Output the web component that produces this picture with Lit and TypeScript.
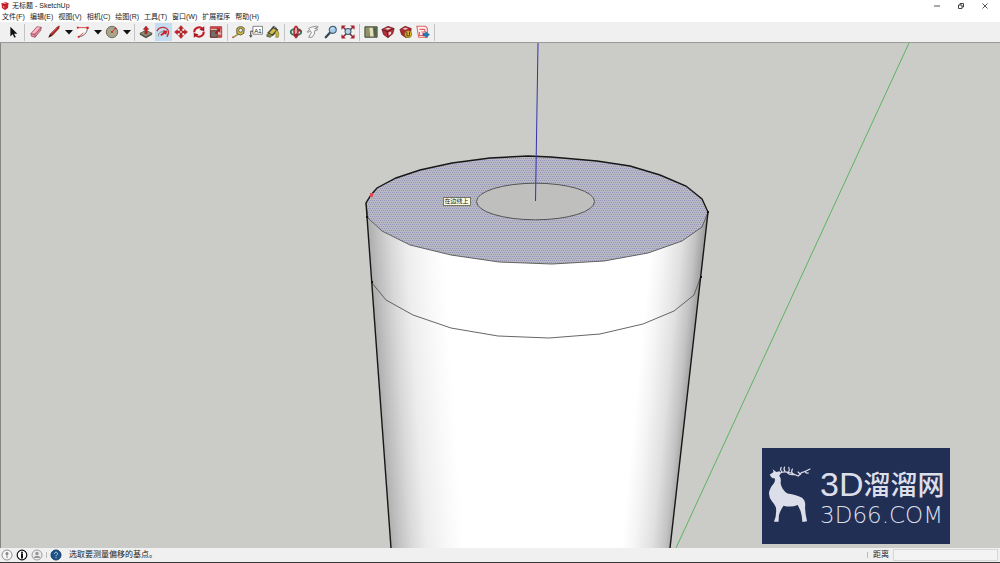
import { LitElement, html, css, svg } from "lit";
import { customElement } from "lit/decorators.js";

const icons: Record<string, unknown> = {
  select: svg`<path d="M5 2v11l2.600-2.500 2 4 1.600-.8-2-3.800H13z" fill="#111"/>`,
  eraser: svg`<path d="M2 10 9 2l5 .5-.5 3.500L7 14l-4-1z" fill="#e88da2" stroke="#8c4659" stroke-width=".8"/><path d="M2 10l5 .7L14 2.700M7 10.700V14" fill="none" stroke="#8c4659" stroke-width=".8"/><path d="M3.500 9 9.500 2.500l3 .3L6.500 9.500z" fill="#f6bcc8"/>`,
  pencil: svg`<path d="M2 14l2-4 7.500-7.500L14 1l-.5 3L6 12z" fill="#b3201f" stroke="#5f1515" stroke-width=".7"/><path d="M2 14l1.500-3.500L5.500 12z" fill="#222"/><path d="M5 9.700 11.700 3" stroke="#e0605c"/>`,
  arc: svg`<path d="M2 3h11.500C13 9 9 13 3 14z" fill="#faf7f5"/><path d="M13 3.500C13 9 8.500 13 3 13.500" fill="none" stroke="#555"/><path d="M2 3h11M3 13.500l5.500-4.500" stroke="#cc3c35" fill="none"/><g fill="#cf2020"><rect x="1" y="2" width="2" height="2"/><rect x="12" y="2" width="2.500" height="2.500"/><rect x="2" y="12.500" width="2" height="2"/></g>`,
  circle: svg`<circle cx="8" cy="8" r="6.500" fill="#a8a58c" stroke="#6b6959" stroke-width="1.100"/><path d="M8 8l4-4.500" stroke="#c83030"/><circle cx="8" cy="8" r="1.200" fill="#cf2626"/><circle cx="12" cy="3.800" r="1" fill="#cf2626"/>`,
  push: svg`<path d="M1 9.500 8 6l7 3.500L8 14z" fill="#8d8a78" stroke="#4b493f" stroke-width=".8"/><path d="M1 9.500 8 13l7-3.500V11l-7 4-7-4z" fill="#55534b"/><path d="M8 1l3.200 4H9.300v5H6.700V5H4.800z" fill="#bd2323" stroke="#711" stroke-width=".4"/>`,
  offset: svg`<path d="M1 7C4 1.500 11.500 1.500 14 6.500c1 2.500 0 4.500-1.500 7" fill="none" stroke="#c3303c" stroke-width="1.500"/><path d="M3 13c-1-3 2-6 5.500-5" fill="none" stroke="#777" stroke-width="1.100"/><path d="M7.500 6 13 6.500l-1.500 5-1.300-1.600L6 12.500 4.800 11l3.900-3z" fill="#c7202a"/>`,
  move: svg`<path d="M8 .5l3 3.500H9.200v2.800H6.800V4H5zM8 15.500l3-3.500H9.200V9.200H6.800V12H5zM.5 8 4 5v1.800h2.800v2.400H4V11zM15.500 8 12 5v1.800H9.200v2.400H12V11z" fill="#c4202a" stroke="#8f171e" stroke-width=".4"/>`,
  rotate: svg`<path d="M2.600 8.500A5.400 5.400 0 0 1 11.500 4M13.400 7.500A5.400 5.400 0 0 1 4.500 12" fill="none" stroke="#c01d28" stroke-width="2.400"/><path d="M14 1.500V7L8.500 5.500zM2 14.500V9l5.500 1.500z" fill="#a61921"/>`,
  scale: svg`<path d="M1.500 2h13v12h-13z" fill="#dcc0b4" stroke="#9f2a2e"/><path d="M2 6.500h7.500V14H2z" fill="#76706a" stroke="#54332f"/><path d="M2 2h12v2.500H2z" fill="#c8474a"/><path d="M13 4v5l-1.700-1.700L8 10.500 6.500 9l3.300-3.300L8 4z" fill="#a91e24"/><path d="M10 11h4v3h-4z" fill="#c8474a"/>`,
  tape: svg`<path d="M1 14.500l6-4" stroke="#a69340" stroke-width="1.800"/><path d="M5.500 4.500C6 1.500 13 1 14 4l-.5 5.500-4 2-4-2z" fill="#d8bd36" stroke="#4d4a37"/><circle cx="9.800" cy="6" r="2.200" fill="#eee" stroke="#555"/><path d="M1 13v2" stroke="#c23232"/>`,
  text: svg`<path d="M4.500 1.500h11v9h-11z" fill="#fff" stroke="#555" stroke-width=".8"/><path d="M4.500 7H2v6M.8 11.500 2 14l1.200-2.500" stroke="#333" fill="none"/><text x="6" y="8.800" font-size="7" font-family="Liberation Sans, sans-serif" fill="#222">A1</text>`,
  paint: svg`<path d="M2 9 8 2.500l5.500 3L8 12z" fill="#55533d" stroke="#28271d"/><path d="M3.500 9 8.500 4l3 1.800L7 10.500z" fill="#d4c04a"/><path d="M7 3c1-3 5-1 5 2" stroke="#444" fill="none"/><path d="M12 6c3 1 3 5 2 8h-3c1-3 .5-4-1-5z" fill="#c8b63d" stroke="#645e28" stroke-width=".6"/><path d="M1 11c2-3 5-1 6 1l-2 2-4-1z" fill="#88894f" stroke="#383a25" stroke-width=".7"/>`,
  orbit: svg`<ellipse cx="8" cy="8" rx="6" ry="3.600" fill="#dfe6e0" stroke="#32765d" stroke-width="2.200"/><path d="M8 1.500c-3 1.500-3 11 0 13 3-2 3-11.500 0-13" fill="#d9a9a9" stroke="#b42c35" stroke-width="1.800"/><path d="M5 11.500 9.500 9v5zM11.500 4.500l3.500 3h-5z" fill="#a3202b"/>`,
  hand: svg`<path d="M3 4 6 2.500l6-1.200 2 1-4 1.700 3 .5v1.200L10 6.500l-.5 4L7 14H3l3-5-1-2.500-3 2-.7-.8L4 5z" fill="#f7f7f5" stroke="#777" stroke-width=".9"/>`,
  zoom: svg`<path d="M2 14l5-5.500" stroke="#364655" stroke-width="2.600" stroke-linecap="round"/><circle cx="10" cy="5.500" r="4" fill="#a5cce6" stroke="#466177" stroke-width="1.300"/><path d="M8 5c.5-1.500 2-2 3-1.500" fill="none" stroke="#f1faff"/>`,
  extents: svg`<path d="M2 2l12 12M14 2 2 14" stroke="#7b2b38" stroke-width="1.700"/><path d="M.5.5h5l-5 5zM15.500.5v5l-5-5zM.5 15.500v-5l5 5zM15.500 15.500h-5l5-5z" fill="#b01d2c"/><circle cx="8" cy="7.500" r="3.400" fill="#b4d5e4" stroke="#435668" stroke-width="1.200"/>`,
  map: svg`<path d="M1 2h14v12H1z" fill="#737958" stroke="#414633"/><path d="M2 3h4v10H2z" fill="#8f9569"/><path d="M6 3h4l1 10H7z" fill="#e3dfba"/><path d="M11 3h3v10h-2z" fill="#4e644b"/>`,
  warehouse: svg`<path d="M1 5l7-3.500L15 4l-1.500 6L8 14.500 3 11z" fill="#b5303a" stroke="#6d1a20" stroke-width=".8"/><path d="M1 5l6 2.500L15 4M7 7.500l1 7" stroke="#5f1a20" fill="none"/><path d="M4.500 4.500 8 3l3.500 1L8 5.500zM8.500 8.500l3-1V10L9 12z" fill="#eadad5"/>`,
  extension: svg`<path d="M1 5l6-3.500L14 4l-1 6-5 4.500L3 11z" fill="#ac2930" stroke="#6d1a20" stroke-width=".8"/><path d="M4 4.500l3-1.500 3.500 1L7.500 5.500z" fill="#ecd9d5"/><circle cx="10.500" cy="10.500" r="4" fill="#ddb82e" stroke="#776021" stroke-width=".8"/><path d="M9 8v3c0 2 3 2 3 0V8" fill="none" stroke="#61421a" stroke-width="1.200"/>`,
  layout: svg`<path d="M1 1.500h10l2 2.500v10H3z" fill="#fff1ef" stroke="#e06463" stroke-width="1.200"/><path d="M4 5h6v3H6M4 8v4h4V9" fill="none" stroke="#e06463" stroke-width="1.200"/><path d="M8 9.500h3V7.500l4.500 3.500-4.500 3.500V12.500H8z" fill="#2878b8" stroke="#165586" stroke-width=".5"/>`,
};

const tool = (name: string, label: string, on = false) => html`
  <button class="tool ${on ? "on" : ""}" aria-label=${label}>
    <svg viewBox="0 0 16 16" width="14" height="14">${icons[name]}</svg>
  </button>`;

const caret = (label: string) => html`
  <button class="tool caret" aria-label=${label}>
    <svg viewBox="0 0 8 5" width="8" height="5"><path d="M0 0h8L4 4.500z" fill="#111"/></svg>
  </button>`;

@customElement("model-view")
class ModelView extends LitElement {
  static styles = css`
    :host { display: block; position: relative; min-height: 0; overflow: hidden; background: #cbccc7; border-left: 1px solid #858683; }
    .scene { display: block; width: 100%; height: 100%; }
    .tip { position: absolute; left: 44.2%; top: 30.5%; padding: 0 1px; border: 1px solid #77765f; background: #fbfbe2; color: #222; font-size: 6px; line-height: 7px; white-space: nowrap; }
    .mark { position: absolute; right: 5%; bottom: 4px; box-sizing: border-box; width: 188px; height: 96px; padding: 17px 5px; display: flex; gap: 8px; background: #222f55; color: #dcdfe9; }
    .deer { flex: none; width: 45px; height: 59px; }
    .words { display: flex; flex-direction: column; white-space: nowrap; }
    .name { display: flex; align-items: center; height: 38px; }
    .latin { font: 34px/38px "Liberation Sans", sans-serif; }
    .han { font: 500 27px/38px "Noto Sans CJK SC", sans-serif; }
    .domain { font: 23px/24px "DejaVu Sans", sans-serif; font-weight: 300; }
  `;

  render() {
    return html`
      <svg class="scene" viewBox="1 43 999 505" preserveAspectRatio="xMidYMid slice" role="img" aria-label="模型">
        <defs>
          <linearGradient id="left" gradientUnits="userSpaceOnUse" x1="375" y1="330" x2="449" y2="325">
            <stop offset="0" stop-color="#adadad"/><stop offset=".12" stop-color="#c0c0c1"/>
            <stop offset=".3" stop-color="#d9d9da"/><stop offset=".5" stop-color="#ededed"/>
            <stop offset=".8" stop-color="#f9f9f9"/><stop offset="1" stop-color="#fff"/>
          </linearGradient>
          <linearGradient id="right" gradientUnits="userSpaceOnUse" x1="694" y1="330" x2="643" y2="325">
            <stop offset="0" stop-color="#a4a4a5"/><stop offset=".15" stop-color="#c3c3c4"/>
            <stop offset=".4" stop-color="#e0e0e0"/><stop offset=".75" stop-color="#f5f5f5"/>
            <stop offset="1" stop-color="#fff"/>
          </linearGradient>
          <pattern id="dots" width="2" height="4" patternUnits="userSpaceOnUse">
            <path d="M0 0h2v4H0z" fill="#b9b9c5"/><path d="M0 0h1v1H0zM1 2h1v1H1z" fill="#9494b8"/>
          </pattern>
        </defs>
        <path d="M909 43 676 548" stroke="#5cb462" fill="none"/>
        <path d="M366 203 391 548H540V200z" fill="url(#left)"/>
        <path d="M708 212 670 548H539V200z" fill="url(#right)"/>
        <path d="M366 203 371 195 377 188 396 178 420 170 452 163 490 158 528 156 551 157 597 161 630 166 660 175 686 186 702 199 708 212 702 227 682 241 648 253 604 261 552 264 499 262 451 255 410 245 382 231 368 218z" fill="url(#dots)"/>
        <path d="M366 203 368 218 382 231 410 245 451 255 499 262 552 264 604 261 648 253 682 241 702 227 708 212M372 283 386 300 413 315 451 328 498 336 549 338 600 334 643 324 674 311 694 295 701 276" fill="none" stroke="#555" stroke-width=".9"/>
        <path d="M391 548 366 203 371 195 377 188 396 178 420 170 452 163 490 158 528 156 551 157 597 161 630 166 660 175 686 186 702 199 708 212 670 548" fill="none" stroke="#171717" stroke-width="1.400"/>
        <ellipse cx="535.500" cy="201.500" rx="59" ry="18.300" fill="#bfbfbe" stroke="#555"/>
        <path d="M538 43 535.500 201" stroke="#3434ad" fill="none"/>
        <path d="M370 193h3v4h-3z" fill="#d94a55"/>
        <path d="M366 216h2v2h-2zM371 281h2v2h-2zM707 211h2v2h-2zM700 276h2v2h-2z" fill="#111"/>
      </svg>
      <div class="tip">在边线上</div>
      <div class="mark">
        <svg class="deer" viewBox="36 74 136 176" aria-hidden="true">
          <path d="M44 102 56 94 53 86 64 94 74 92 78 98 73 105Q80 113 77 128 81 149 98 159 126 163 142 172 154 182 151 200 151 217 157 243L143 245Q142 225 137 210 132 202 129 194 108 202 86 196 76 210 72 225L71 244H57Q66 225 63 201 58 190 52 184 39 168 43 152 47 138 57 128 62 119 59 113 50 114 44 102z" fill="#dcdfe9"/>
          <path d="M74 98Q84 92 98 94 116 98 130 106 136 102 140 96 154 92 166 85M82 94Q74 88 79 80M91 93Q85 87 89 79M101 95Q105 87 102 80M113 99Q108 92 113 85M137 101 130 94M151 92Q153 99 161 97M96 95Q104 104 118 102" fill="none" stroke="#dcdfe9" stroke-width="3.500" stroke-linecap="round"/>
        </svg>
        <div class="words">
          <div class="name"><span class="latin">3D</span><span class="han">溜溜网</span></div>
          <div class="domain">3D66.COM</div>
        </div>
      </div>`;
  }
}

@customElement("app-root")
class AppRoot extends LitElement {
  static styles = css`
    :host { display: grid; grid-template-rows: 12px 10px 21px minmax(0, 1fr) 14px; box-sizing: border-box; height: 100vh; border-bottom: 1px solid #363636; background: #fff; color: #222; font-family: "Liberation Sans", "Noto Sans CJK SC", sans-serif; }
    button, input { font: inherit; color: inherit; margin: 0; padding: 0; border: 0; background: none; }
    button { display: flex; align-items: center; justify-content: center; }
    .title { display: flex; align-items: center; gap: 3px; padding: 0 5px 0 1px; font-size: 7px; line-height: 12px; }
    .caption { flex: 1; }
    .win { width: 21px; height: 12px; }
    .menu { display: flex; align-items: center; gap: 5px; padding-left: 2px; font-size: 7px; line-height: 10px; white-space: nowrap; }
    .bar { display: flex; align-items: center; box-sizing: border-box; padding-left: 4px; background: #f0f0f0; border-bottom: 1px solid #9b9b99; }
    .group { display: grid; grid-auto-flow: column; grid-auto-columns: 1fr; }
    .single { width: 18px; }
    .draw { grid-template-columns: 18px 18px 11px 18px 11px 18px 11px; }
    .edit { width: 88px; }
    .three { width: 52px; }
    .four { width: 70px; }
    .tool { height: 18px; }
    .on { background: #c5ddf1; }
    .rule { width: 1px; height: 17px; margin: 0 2px; background: #c3c3c3; }
    .status { display: flex; align-items: center; gap: 3px; padding: 0 2px 0 1px; background: #f0f0f0; font-size: 8px; line-height: 14px; }
    .round { width: 12px; height: 12px; }
    .thin { width: 1px; height: 6px; background: #bbb; }
    .hint { flex: 1; padding-left: 4px; }
    .measure { display: flex; align-items: center; gap: 4px; padding-left: 2px; }
    .field { box-sizing: border-box; width: 105px; height: 12px; border: 1px solid #d5d8da; background: #f3f3f3; }
  `;

  menus = ["文件(F)", "编辑(E)", "视图(V)", "相机(C)", "绘图(R)", "工具(T)", "窗口(W)", "扩展程序", "帮助(H)"];

  render() {
    return html`
      <header class="title">
        <svg viewBox="0 0 16 16" width="8" height="8"><path d="M1 3 10 0l5 3-1 9-6 4-6-4z" fill="#d3222a"/><path d="M1 3l6 3 8-3M7 6l1 9" stroke="#8f161c" fill="none"/><path d="M4 3l6-2 2 1-5 2zM4 8l3 1v3l-3-2z" fill="#f4b3ae"/></svg>
        <span class="caption">无标题 - SketchUp</span>
        <button class="win" aria-label="最小化"><svg width="6" height="6"><path d="M0 3h6" stroke="#555"/></svg></button>
        <button class="win" aria-label="还原"><svg width="6" height="6"><path d="M.5 2h3.500v3.500H.5zM2 2V.5h3.500V4H4" stroke="#444" fill="none"/></svg></button>
        <button class="win" aria-label="关闭"><svg width="6" height="6"><path d="M.5.5l5 5M5.500.5l-5 5" stroke="#555"/></svg></button>
      </header>
      <nav class="menu">${this.menus.map((m) => html`<button>${m}</button>`)}</nav>
      <div class="bar" role="toolbar">
        <div class="group single">${tool("select", "选择")}</div>
        <span class="rule"></span>
        <div class="group draw">
          ${tool("eraser", "擦除")}${tool("pencil", "直线")}${caret("更多直线")}
          ${tool("arc", "圆弧")}${caret("更多圆弧")}${tool("circle", "圆")}${caret("更多形状")}
        </div>
        <span class="rule"></span>
        <div class="group edit">
          ${tool("push", "推拉")}${tool("offset", "偏移", true)}${tool("move", "移动")}${tool("rotate", "旋转")}${tool("scale", "缩放")}
        </div>
        <span class="rule"></span>
        <div class="group three">${tool("tape", "卷尺")}${tool("text", "文字")}${tool("paint", "材质")}</div>
        <span class="rule"></span>
        <div class="group four">${tool("orbit", "环绕")}${tool("hand", "平移")}${tool("zoom", "视图缩放")}${tool("extents", "充满视窗")}</div>
        <span class="rule"></span>
        <div class="group four">${tool("map", "添加位置")}${tool("warehouse", "模型库")}${tool("extension", "扩展程序库")}${tool("layout", "发送到布局")}</div>
        <span class="rule"></span>
      </div>
      <model-view></model-view>
      <footer class="status">
        <button class="round" aria-label="地理位置"><svg width="12" height="12"><circle cx="6" cy="6" r="5" fill="#f7f7f7" stroke="#777" stroke-width=".8"/><circle cx="6" cy="4.500" r="1.500" fill="#888"/><path d="M6 5v4" stroke="#888"/></svg></button>
        <button class="round" aria-label="归属"><svg width="12" height="12"><circle cx="6" cy="6" r="4.800" fill="#fff" stroke="#111" stroke-width="1.200"/><circle cx="6" cy="3.500" r="1" fill="#111"/><path d="M6 4.500v5" stroke="#111" stroke-width="2"/></svg></button>
        <button class="round" aria-label="登录"><svg width="12" height="12"><circle cx="6" cy="6" r="5" fill="#eee" stroke="#888" stroke-width=".8"/><circle cx="6" cy="4.500" r="1.800" fill="#999"/><path d="M2.500 9c1-3 6-3 7 0z" fill="#999"/></svg></button>
        <span class="thin"></span>
        <button class="round" aria-label="帮助"><svg width="12" height="12"><circle cx="6" cy="6" r="5" fill="#1f5488" stroke="#173f68"/><path d="M4.500 4.800C4.500 2.500 8 3 7.500 5 7.300 6 6 6 6 7.200M6 8.200v1" fill="none" stroke="#b9d2e8"/></svg></button>
        <span class="hint">选取要测量偏移的基点。</span>
        <span class="thin"></span>
        <div class="measure"><label for="distance">距离</label><input class="field" id="distance" type="text" /></div>
      </footer>`;
  }
}
